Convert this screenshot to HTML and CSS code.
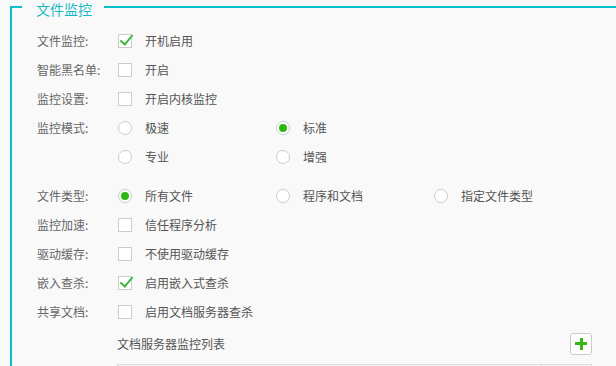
FILE: index.html
```html
<!DOCTYPE html>
<html lang="zh-CN">
<head>
  <meta charset="UTF-8">
  <title>文件监控</title>
  <link rel="stylesheet" href="styles.css">
</head>
<body>

  <fieldset class="panel">
    <legend>文件监控</legend>

    <div class="row">
      <span class="label">文件监控:</span>
      <label class="opt"><span class="box on"></span>开机启用</label>
    </div>
    <div class="row">
      <span class="label">智能黑名单:</span>
      <label class="opt"><span class="box"></span>开启</label>
    </div>
    <div class="row">
      <span class="label">监控设置:</span>
      <label class="opt"><span class="box"></span>开启内核监控</label>
    </div>
    <div class="row">
      <span class="label">监控模式:</span>
      <label class="opt"><span class="radio"></span>极速</label>
      <label class="opt"><span class="radio on"></span>标准</label>
    </div>
    <div class="row">
      <span class="label"></span>
      <label class="opt"><span class="radio"></span>专业</label>
      <label class="opt"><span class="radio"></span>增强</label>
    </div>

    <div class="row spaced">
      <span class="label">文件类型:</span>
      <label class="opt"><span class="radio on"></span>所有文件</label>
      <label class="opt"><span class="radio"></span>程序和文档</label>
      <label class="opt"><span class="radio"></span>指定文件类型</label>
    </div>
    <div class="row">
      <span class="label">监控加速:</span>
      <label class="opt"><span class="box"></span>信任程序分析</label>
    </div>
    <div class="row">
      <span class="label">驱动缓存:</span>
      <label class="opt"><span class="box"></span>不使用驱动缓存</label>
    </div>
    <div class="row">
      <span class="label">嵌入查杀:</span>
      <label class="opt"><span class="box on"></span>启用嵌入式查杀</label>
    </div>
    <div class="row">
      <span class="label">共享文档:</span>
      <label class="opt"><span class="box"></span>启用文档服务器查杀</label>
    </div>

    <div class="list-head">
      <span>文档服务器监控列表</span>
      <button class="add" title="添加"></button>
    </div>
    <div class="list-table">
      <div class="cell"></div>
      <div class="cell last"></div>
    </div>
  </fieldset>

</body>
</html>
```

FILE: styles.css
```css
* {
  box-sizing: border-box;
}

body {
  margin: 0;
  background: #f9f9f9;
  font-family: "Microsoft YaHei", "Noto Sans CJK SC", sans-serif;
  font-size: 12px;
  color: #555;
  overflow: hidden;
}

.panel {
  margin: 0 4px 0 10px;
  padding: 12px 25px 0 25px;
  border: 2px solid #00c1c9;
  border-radius: 0;
  min-height: 400px;
}

/* short line box so the border sits a bit above the text middle */
.panel legend {
  margin-left: -15px;
  padding: 5px 12px 0 14px;
  font-size: 14px;
  line-height: 9px;
  color: #1ab9c6;
}

.row {
  display: flex;
  align-items: center;
  height: 29px;
}

.row.spaced {
  margin-top: 10px;
}

.label {
  width: 81px;
  flex: none;
  color: #666;
}

.opt {
  width: 158px;
  flex: none;
  display: flex;
  align-items: center;
  gap: 13px;
}

.box, .radio {
  position: relative;
  width: 14px;
  height: 14px;
  flex: none;
  border: 1px solid #ccc;
  background: #fff;
}

.radio {
  border-radius: 50%;
}

.radio.on::after {
  content: "";
  position: absolute;
  left: 2px;
  top: 2px;
  width: 8px;
  height: 8px;
  border-radius: 50%;
  background: #2cb80e;
}

/* green tick that pokes out of the box */
.box.on::after {
  content: "";
  position: absolute;
  left: 4px;
  top: -3px;
  width: 5px;
  height: 11px;
  border: solid #3db83b;
  border-width: 0 2.5px 2.5px 0;
  transform: rotate(40deg);
}

.list-head {
  display: flex;
  align-items: center;
  justify-content: space-between;
  height: 27px;
  margin-top: 4px;
  padding-left: 80px;
  color: #555;
}

.add {
  position: relative;
  width: 22px;
  height: 22px;
  padding: 0;
  border: 1px solid #ccc;
  border-radius: 3px;
  background: #fff;
}

.add::before, .add::after {
  content: "";
  position: absolute;
  background: #34b814;
}

.add::before {
  left: 4px;
  top: 8.5px;
  width: 12px;
  height: 3px;
}

.add::after {
  left: 8.5px;
  top: 4px;
  width: 3px;
  height: 12px;
}

.list-table {
  display: flex;
  margin: 7px 0 0 80px;
  height: 30px;
  border: 1px solid #ddd;
  background: #f3f3f3;
}

.cell {
  flex: 1;
}

.cell.last {
  flex: none;
  width: 50px;
  border-left: 1px solid #ddd;
}
```
